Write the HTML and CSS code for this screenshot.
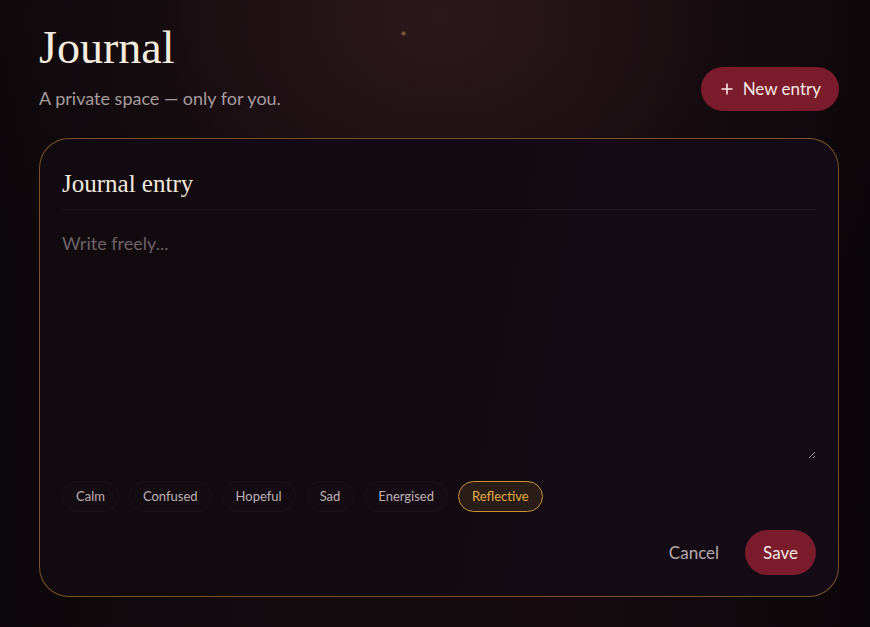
FILE: index.html
```html
<!DOCTYPE html>
<html lang="en">
<head>
<meta charset="utf-8">
<title>Journal</title>
<link rel="stylesheet" href="styles.css">
</head>
<body>
<div class="bg-dots">
  <span class="dot" style="left:401px;top:31px"></span>
  <span class="dot dim" style="left:820px;top:198px"></span>
  <span class="dot" style="left:325px;top:258px"></span>
  <span class="dot" style="left:191px;top:416px"></span>
  <span class="dot" style="left:610px;top:588px"></span>
</div>
<main class="page">
  <header class="page-header">
    <div class="heading">
      <h1 class="title">Journal</h1>
      <p class="subtitle">A private space — only for you.</p>
    </div>
    <button class="btn-primary new-entry" type="button">
      <svg class="plus" width="12" height="12" viewBox="0 0 12 12" aria-hidden="true">
        <path d="M6 0.5V11.5M0.5 6H11.5" stroke="currentColor" stroke-width="1.6" fill="none"/>
      </svg>
      <span>New entry</span>
    </button>
  </header>

  <section class="card">
    <h2 class="card-title">Journal entry</h2>
    <textarea class="entry" placeholder="Write freely..."></textarea>
    <div class="moods">
      <button class="chip" type="button">Calm</button>
      <button class="chip" type="button">Confused</button>
      <button class="chip" type="button">Hopeful</button>
      <button class="chip" type="button">Sad</button>
      <button class="chip" type="button">Energised</button>
      <button class="chip active" type="button">Reflective</button>
    </div>
    <div class="actions">
      <button class="btn-ghost" type="button">Cancel</button>
      <button class="btn-primary save" type="button">Save</button>
    </div>
  </section>
</main>
</body>
</html>
```

FILE: styles.css
```css
* { box-sizing: border-box; }

html, body { height: 100%; }

body {
  margin: 0;
  min-height: 100vh;
  font-family: Lato, "Noto Sans", sans-serif;
  color: #f3e9de;
  background:
    radial-gradient(ellipse 520px 380px at 440px 20px, rgba(52, 28, 30, 0.75), rgba(30, 16, 20, 0.35) 55%, rgba(0,0,0,0) 100%),
    linear-gradient(90deg, #0c070a 0%, #150c10 35%, #160c10 65%, #0b0609 100%);
  overflow: hidden;
  position: relative;
}

.bg-dots {
  position: absolute;
  inset: 0;
  pointer-events: none;
}

.dot {
  position: absolute;
  width: 5px;
  height: 5px;
  border-radius: 50%;
  background: radial-gradient(circle, rgba(170, 125, 70, 0.9) 0%, rgba(140, 100, 55, 0.5) 50%, rgba(120, 80, 40, 0) 100%);
}

.dot.dim {
  background: radial-gradient(circle, rgba(120, 110, 110, 0.8) 0%, rgba(100, 90, 95, 0.4) 50%, rgba(80, 70, 70, 0) 100%);
}

.page {
  position: relative;
  padding: 23px 31px 0 39px;
}

.page-header {
  display: flex;
  justify-content: space-between;
  align-items: flex-end;
}

.title {
  margin: 0;
  font-family: "Liberation Serif", "DejaVu Serif", serif;
  font-weight: 400;
  font-size: 46px;
  line-height: 1.1;
  color: #f5ebdf;
}

.subtitle {
  margin: 12px 0 0;
  font-size: 18px;
  line-height: 1.4;
  color: #a69b9d;
}

.btn-primary {
  border: 0;
  border-radius: 999px;
  background: #7b1c2c;
  color: #f6e9e4;
  font-family: Lato, "Noto Sans", sans-serif;
  font-size: 17px;
  cursor: pointer;
}

.new-entry {
  display: flex;
  align-items: center;
  gap: 10px;
  height: 44px;
  padding: 0 18px 0 20px;
}

.plus { display: block; }

.card {
  margin-top: 27px;
  height: 459px;
  border: 1px solid rgba(190, 130, 50, 0.6);
  border-radius: 30px;
  padding: 30px 22px 21px 22px;
  background: linear-gradient(100deg, #110a0e 0%, #130a11 50%, #150b17 100%);
  display: flex;
  flex-direction: column;
}

.card-title {
  margin: 0;
  padding-bottom: 10px;
  border-bottom: 1px solid rgba(255, 235, 230, 0.06);
  font-family: "Liberation Serif", "DejaVu Serif", serif;
  font-weight: 400;
  font-size: 25px;
  line-height: 30px;
  color: #f3e9de;
}

.entry {
  display: block;
  width: 100%;
  height: 238px;
  margin-top: 11px;
  padding: 10px 0 0;
  border: 0;
  outline: none;
  background: transparent;
  resize: vertical;
  font-family: Lato, "Noto Sans", sans-serif;
  font-size: 18px;
  line-height: 1.4;
  color: #e8dcd8;
}

.entry::placeholder { color: #6e6168; }

.moods {
  display: flex;
  gap: 10px;
  margin-top: 22px;
}

.chip {
  height: 31px;
  padding: 0 13px;
  border-radius: 999px;
  border: 1px solid rgba(255, 235, 240, 0.025);
  background: rgba(255, 240, 245, 0.01);
  color: #bdb1b4;
  font-family: Lato, "Noto Sans", sans-serif;
  font-size: 13px;
  cursor: pointer;
}

.chip.active {
  border-color: #c79235;
  background: #2a1d17;
  color: #e4ab45;
}

.actions {
  display: flex;
  justify-content: flex-end;
  align-items: center;
  gap: 12px;
  margin-top: 18px;
}

.btn-ghost {
  border: 0;
  background: transparent;
  color: #b4a9ac;
  font-family: Lato, "Noto Sans", sans-serif;
  font-size: 17px;
  padding: 0 14px;
  height: 45px;
  cursor: pointer;
}

.save {
  height: 45px;
  padding: 0 18px;
}
```
